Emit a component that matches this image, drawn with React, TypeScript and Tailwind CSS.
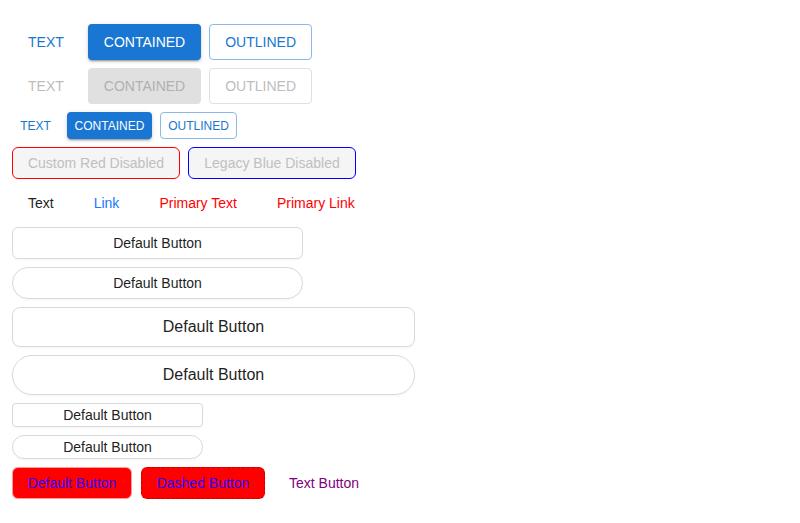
import React from "react";

const font = "font-['Liberation_Sans',Arial,sans-serif]";

export default function App() {
  const muiBase =
    "h-9 px-4 rounded-[4px] text-[14px] uppercase flex items-center justify-center";
  const muiSmall =
    "h-[27px] rounded-[4px] text-[12px] uppercase flex items-center justify-center";
  const antdDefault =
    "border border-[#d9d9d9] bg-white text-[#1f1f1f] flex items-center justify-center shadow-[0_2px_0_rgba(0,0,0,0.02)]";
  const muiShadow =
    "shadow-[0_3px_1px_-2px_rgba(0,0,0,0.2),0_2px_2px_0_rgba(0,0,0,0.14),0_1px_5px_0_rgba(0,0,0,0.12)]";

  return (
    <div className={`${font} bg-white min-h-[523px] w-[800px] pl-3 pt-6 flex flex-col gap-2 items-start`}>
      {/* MUI row 1 */}
      <div className="flex gap-2">
        <button className={`${muiBase} text-[#1976d2]`}>Text</button>
        <button className={`${muiBase} bg-[#1976d2] text-white ${muiShadow}`}>Contained</button>
        <button className={`${muiBase} border border-[#8cbae8] text-[#1976d2] px-[15px]`}>Outlined</button>
      </div>
      {/* MUI row 2 disabled */}
      <div className="flex gap-2">
        <button className={`${muiBase} text-[#bdbdbd]`}>Text</button>
        <button className={`${muiBase} bg-[#e0e0e0] text-[#b0b0b0]`}>Contained</button>
        <button className={`${muiBase} border border-[#e0e0e0] text-[#bdbdbd] px-[15px]`}>Outlined</button>
      </div>
      {/* MUI small */}
      <div className="flex gap-2">
        <button className={`${muiSmall} w-[47px] text-[#1976d2]`}>Text</button>
        <button className={`${muiSmall} w-[85px] bg-[#1976d2] text-white ${muiShadow}`}>Contained</button>
        <button className={`${muiSmall} w-[77px] border border-[#8cbae8] text-[#1976d2]`}>Outlined</button>
      </div>
      {/* Custom disabled */}
      <div className="flex gap-2">
        <button className="h-8 w-[168px] rounded-[6px] border border-[#ff0000] bg-[#f5f5f5] text-[#bfbfbf] text-[14px] flex items-center justify-center">
          Custom Red Disabled
        </button>
        <button className="h-8 w-[168px] rounded-[6px] border border-[#0000ff] bg-[#f5f5f5] text-[#bfbfbf] text-[14px] flex items-center justify-center">
          Legacy Blue Disabled
        </button>
      </div>
      {/* Text / link */}
      <div className="flex gap-2 text-[14px]">
        <button className="h-8 px-4 text-[#1f1f1f] flex items-center">Text</button>
        <button className="h-8 px-4 text-[#1677ff] flex items-center">Link</button>
        <button className="h-8 px-4 text-[#ff0000] flex items-center">Primary Text</button>
        <button className="h-8 px-4 text-[#ff0000] flex items-center">Primary Link</button>
      </div>
      {/* Default buttons */}
      <button className={`${antdDefault} h-8 w-[291px] rounded-[6px] text-[14px]`}>Default Button</button>
      <button className={`${antdDefault} h-8 w-[291px] rounded-full text-[14px]`}>Default Button</button>
      <button className={`${antdDefault} h-10 w-[403px] rounded-[8px] text-[16px]`}>Default Button</button>
      <button className={`${antdDefault} h-10 w-[403px] rounded-full text-[16px]`}>Default Button</button>
      <button className={`${antdDefault} h-6 w-[191px] rounded-[4px] text-[14px]`}>Default Button</button>
      <button className={`${antdDefault} h-6 w-[191px] rounded-full text-[14px]`}>Default Button</button>
      {/* Colored row */}
      <div className="flex gap-2 text-[14px]">
        <button className="h-8 w-[120px] rounded-[6px] border border-[#ff9a9a] bg-[#ff0000] text-[#2a00ff] flex items-center justify-center">
          Default Button
        </button>
        <button className="h-8 w-[124px] ml-px rounded-[6px] border border-dashed border-[#c80000] bg-[#ff0000] text-[#2a00ff] flex items-center justify-center">
          Dashed Button
        </button>
        <button className="h-8 px-4 text-[#800080] flex items-center">Text Button</button>
      </div>
    </div>
  );
}
